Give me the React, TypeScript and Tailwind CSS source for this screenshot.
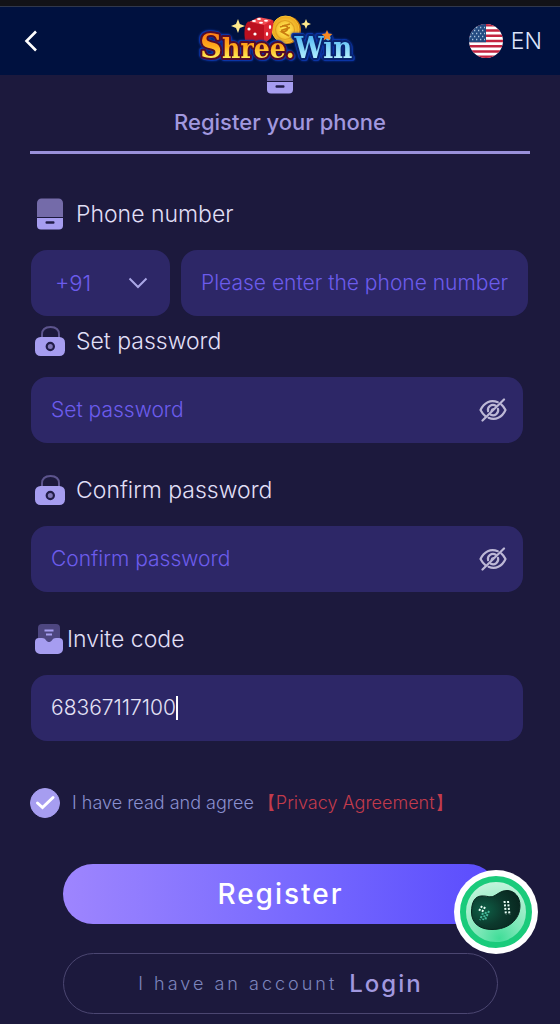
import { useState, type ReactNode } from "react";

function PhoneIcon() {
  return (
    <svg width="26" height="32" viewBox="0 0 26 32" aria-hidden="true" className="shrink-0">
      <path d="M0 19V5a4.500 4.500 0 0 1 4.500-4.500h17A4.500 4.500 0 0 1 26 5v14z" fill="#746ba9" />
      <path d="M0 20h26v7.500a4 4 0 0 1-4 4H4a4 4 0 0 1-4-4z" fill="#a69df0" />
      <rect x="8.500" y="23.300" width="9" height="2.400" rx="1" fill="#211c48" />
    </svg>
  );
}

function LockIcon() {
  return (
    <svg width="30" height="32" viewBox="0 0 30 32" aria-hidden="true" className="shrink-0">
      <path d="M7 13V9.500C7 4.500 10 2 15.500 2S24 4.500 24 9.500V13" fill="none" stroke="#5c548d" strokeWidth="2" />
      <rect y="12" width="30" height="19" rx="5.500" fill="#a69df0" />
      <circle cx="15.300" cy="21.500" r="3.600" fill="#8077b8" stroke="#211c48" strokeWidth="2.200" />
    </svg>
  );
}

function InviteIcon() {
  return (
    <svg width="28" height="32" viewBox="0 0 28 32" aria-hidden="true" className="shrink-0">
      <rect x="3" y="1" width="22" height="24" rx="4" fill="#4d4680" />
      <path d="M9.500 7.500h9M11 11.500h6" stroke="#a69df0" strokeWidth="2" />
      <path d="M4 15h3c2 0 3 .8 4 2.200 1.600 2.400 4.400 2.400 6 0C18 15.800 19 15 21 15h3a4 4 0 0 1 4 4v7a5 5 0 0 1-5 5H5a5 5 0 0 1-5-5v-7a4 4 0 0 1 4-4z" fill="#a69df0" />
    </svg>
  );
}

function EyeOffIcon() {
  return (
    <svg width="28" height="24" viewBox="0 0 28 24" fill="none" stroke="#bdb8d6" strokeWidth="2.200" strokeLinecap="round" strokeLinejoin="round" aria-hidden="true">
      <path d="M18.800 4.200C11.500 1.200 5 4.500 1.500 12c1.300 2.500 2.800 4.400 4.600 5.800M22.200 6.300C24 7.700 25.300 9.600 26.500 12 23 19.500 16.500 22.800 9.500 19.800" />
      <path d="M16.800 7.700c-4-2.400-8.800 1-7.700 5.500M19 10.800c1.200 4.300-3.300 8-7.200 6" />
      <path d="M14.500 10.800c-1.500.2-2 .8-2.200 2" strokeWidth="1.600" />
      <path d="M25 1.500 3.500 22.500" />
    </svg>
  );
}

function Logo() {
  return (
    <svg width="160" height="56" viewBox="0 0 160 56" role="img" aria-label="Shree.Win" className="overflow-visible">
      <defs>
        <linearGradient id="gold" gradientUnits="userSpaceOnUse" x1="0" y1="21" x2="0" y2="46">
          <stop offset="0" stopColor="#ff7f16" />
          <stop offset="0.5" stopColor="#ffac1c" />
          <stop offset="1" stopColor="#fff25a" />
        </linearGradient>
        <linearGradient id="ice" gradientUnits="userSpaceOnUse" x1="0" y1="21" x2="0" y2="46">
          <stop offset="0" stopColor="#49b5f4" />
          <stop offset="1" stopColor="#b8f2ff" />
        </linearGradient>
        <radialGradient id="coin">
          <stop offset="0.3" stopColor="#ffe04c" />
          <stop offset="1" stopColor="#eba41c" />
        </radialGradient>
      </defs>
      <circle cx="86" cy="17" r="14" fill="#c97b12" />
      <circle cx="84.500" cy="16.500" r="13.500" fill="url(#coin)" stroke="#f7c331" />
      <circle cx="84" cy="17" r="9.500" fill="none" stroke="#e0a021" strokeWidth="1.200" />
      <path d="m79 14 10-3m-9 6.500 9-3M81 13c7-2 8 5 0 6l7 4" fill="none" stroke="#ca7c10" strokeWidth="1.800" />
      <path d="m48 9 8-4q2-1 4-.5l10 2q2 .5 0 2l-7 5z" fill="#f04a50" />
      <path d="M47 8.500 63 12v20H47l-3-5q-2-14 3-18.500z" fill="#bc101f" />
      <path d="m63 12 8-5q2 0 1.500 3L70 25l-7 6z" fill="#dc2533" />
      <g fill="#fff">
        <ellipse cx="53" cy="8" rx="2" ry="1" /><ellipse cx="58" cy="6" rx="2" ry="1" />
        <ellipse cx="60" cy="9.800" rx="2" ry="1" /><ellipse cx="65" cy="7.800" rx="2" ry="1" />
        <circle cx="48" cy="16" r="1.600" /><circle cx="54" cy="21" r="1.600" />
        <ellipse cx="69" cy="14" rx="1.200" ry="2" /><ellipse cx="66" cy="21" rx="1.200" ry="2" />
      </g>
      <path d="m37 6 1.800 5L44 13l-5.200 2L37 20l-2-5-5-2 5-2z" fill="#ffe98c" />
      <path d="m105 6 1.400 3.600L110 11l-3.600 1.400L105 16l-1.400-3.600L100 11l3.600-1.400z" fill="#ffe98c" />
      <text
        x="-1"
        y="45"
        fontFamily="'DejaVu Serif Condensed','DejaVu Serif',serif"
        fontWeight="700"
        fontSize="29"
        strokeLinejoin="round"
        strokeWidth="4"
        paintOrder="stroke"
        className="[filter:drop-shadow(1px_1px_0_#0b35a5)_drop-shadow(-1px_-1px_0_#0b35a5)_drop-shadow(0_0_1px_#0b35a5)]"
      >
        <tspan fill="url(#gold)" stroke="#530b2a" fontSize="34">S</tspan>
        <tspan fill="url(#gold)" stroke="#530b2a" fontSize="28">hree.</tspan>
        <tspan fill="url(#ice)" stroke="#09246f">Win</tspan>
      </text>
      <path d="m126 17 1.600 3.400 3.700.5-2.700 2.600.7 3.700-3.300-1.800-3.300 1.800.7-3.700-2.700-2.600 3.700-.5z" fill="#f88922" />
    </svg>
  );
}

function Flag() {
  return (
    <svg width="34" height="34" viewBox="0 0 34 34" aria-hidden="true">
      <clipPath id="round"><circle cx="17" cy="17" r="17" /></clipPath>
      <g clipPath="url(#round)">
        <path fill="#fff" d="M0 0h34v34H0z" />
        <path stroke="#c32440" strokeWidth="2.620" d="M0 1.300h34M0 6.500h34M0 11.800h34M0 17h34M0 22.200h34M0 27.500h34M0 32.700h34" />
        <path fill="#234a80" d="M0 0h17v18.300H0z" />
        <path stroke="#a9c2dc" strokeWidth="1.300" strokeDasharray="1.300 2.700" d="M3 3.500h13M1 6.500h15M3 9.500h13M1 12.500h15M3 15.500h13" />
      </g>
    </svg>
  );
}

function SupportIcon() {
  return (
    <svg width="84" height="84" viewBox="0 0 84 84" aria-hidden="true">
      <defs>
        <radialGradient id="mint" cx="0.55" cy="0.9" r="0.9">
          <stop offset="0" stopColor="#40dd98" />
          <stop offset="0.35" stopColor="#7be7b7" />
          <stop offset="1" stopColor="#c9f5df" />
        </radialGradient>
        <radialGradient id="bean" cx="0.25" cy="0.5" r="0.8">
          <stop offset="0" stopColor="#0e6047" />
          <stop offset="0.5" stopColor="#0c3a2d" />
          <stop offset="1" stopColor="#08251e" />
        </radialGradient>
      </defs>
      <circle cx="42" cy="42" r="42" fill="#fff" />
      <circle cx="42" cy="42" r="33" fill="url(#mint)" stroke="#1acb7b" strokeWidth="6" />
      <path d="M27 26c6-.5 9 2 13 0s7-5.500 13-5.500c7.500 0 13 6.500 13 15C66 50 54 59.500 38 59.500c-12 0-20.500-6-20.500-17.500 0-10 3.500-15.500 9.500-16z" fill="url(#bean)" stroke="#07241d" />
      <g strokeWidth="2" strokeDasharray="2 1.500" fill="none">
        <path d="m28 36-3 5m6-4-3 5" stroke="#e9fff6" />
        <path d="m29 43-3 7m6-8-3 8m6-9-4 9" stroke="#45b99a" />
        <path d="m50.500 31 1.500 14m2-14 1.500 14" stroke="#e9fff6" />
      </g>
    </svg>
  );
}

const fieldBox = "flex h-[66px] items-center rounded-2xl bg-[#2d2767]";
const inputText = "bg-transparent text-[21px] font-light outline-none placeholder:text-[#6c5cec] placeholder:opacity-100";

function FieldLabel({ htmlFor, icon, children, tight }: { htmlFor: string; icon: ReactNode; children: string; tight?: boolean }) {
  return (
    <label htmlFor={htmlFor} className={`flex h-10 items-center text-[23px] font-light text-[#e0dff6] ${tight ? "gap-1" : ""}`}>
      <span className={tight ? "flex w-8 justify-end" : "flex w-[45px] pl-1"}>{icon}</span>
      {children}
    </label>
  );
}

function PasswordField({ id, label }: { id: string; label: string }) {
  const [shown, setShown] = useState(false);
  return (
    <div>
      <FieldLabel htmlFor={id} icon={<LockIcon />}>{label}</FieldLabel>
      <div className={`${fieldBox} mt-4 mr-[7px] pr-4 pl-5`}>
        <input id={id} type={shown ? "text" : "password"} placeholder={label} className={`${inputText} min-w-0 flex-1 text-[#e0dff6]`} />
        <button type="button" aria-label="Toggle password visibility" onClick={() => setShown(!shown)}>
          <EyeOffIcon />
        </button>
      </div>
    </div>
  );
}

export default function App() {
  const [agreed, setAgreed] = useState(true);
  return (
    <div className="min-h-screen overflow-hidden bg-[#1c193d] pb-2.5 font-['Inter',sans-serif]">
      <header className="border-t-[6px] border-[#121217] bg-[#00113f]">
        <div className="grid h-[69px] grid-cols-[1fr_auto_1fr] items-center border-t border-[#30374b] pr-[18px] pl-5">
          <button type="button" aria-label="Back" className="justify-self-start">
            <svg width="24" height="24" viewBox="0 0 24 24" fill="none" stroke="#fff" strokeWidth="2.600" aria-hidden="true">
              <path d="M16 2.500 6.500 12l9.500 9.500" />
            </svg>
          </button>
          <Logo />
          <button type="button" className="flex items-center gap-2 justify-self-end text-[23px] font-light text-[#dce4fb]">
            <Flag />
            EN
          </button>
        </div>
      </header>

      <main className="px-[30px]">
        <div className="flex h-[19px] items-end justify-center overflow-hidden">
          <PhoneIcon />
        </div>
        <h1 className="flex h-[60px] items-center justify-center border-b-[3px] border-[#9990da] text-[22px] font-medium text-[#a198df]">
          Register your phone
        </h1>

        <form className="mt-10 pl-px" onSubmit={(e) => e.preventDefault()}>
          <FieldLabel htmlFor="phone" icon={<span className="pl-0.5"><PhoneIcon /></span>}>Phone number</FieldLabel>
          <div className="mt-4 flex gap-[11px]">
            <div className={`${fieldBox} relative w-[139px] shrink-0`}>
              <select aria-label="Country code" className="h-full w-full appearance-none bg-transparent pl-6 text-[22px] font-light text-[#6c5cec] outline-none">
                <option>+91</option>
              </select>
              <svg width="20" height="12" viewBox="0 0 20 12" fill="none" stroke="#aaa7e6" strokeWidth="2" aria-hidden="true" className="pointer-events-none absolute right-[22px]">
                <path d="m1.500 1.500 8.500 8.500 8.500-8.500" />
              </svg>
            </div>
            <div className={`${fieldBox} mr-0.5 min-w-0 flex-1 pr-2 pl-5`}>
              <input id="phone" type="tel" placeholder="Please enter the phone number" className={`${inputText} w-full text-[#e0dff6]`} />
            </div>
          </div>

          <div className="mt-[5px] flex flex-col gap-[27px]">
            <PasswordField id="password" label="Set password" />
            <PasswordField id="confirm" label="Confirm password" />
            <div>
              <FieldLabel htmlFor="invite" tight icon={<InviteIcon />}>Invite code</FieldLabel>
              <div className={`${fieldBox} mt-4 mr-[7px] px-5`}>
                <input id="invite" defaultValue="68367117100" className={`${inputText} max-w-full [field-sizing:content] text-[#e4e2f6]`} />
                <span className="h-6 w-0.5 bg-white" />
              </div>
            </div>
          </div>

          <div className="mt-[47px] flex h-[30px] items-center text-lg font-light">
            <label className="flex items-center gap-3 text-[#8a90cf]">
              <span className="relative -ml-px flex">
                <input type="checkbox" checked={agreed} onChange={(e) => setAgreed(e.target.checked)} className="peer size-[30px] appearance-none rounded-full border border-[#a69df0] checked:bg-[#a69df0]" />
                <svg width="30" height="30" viewBox="0 0 30 30" fill="none" stroke="#fff" strokeWidth="3" strokeLinecap="round" aria-hidden="true" className="pointer-events-none absolute hidden peer-checked:block">
                  <path d="m7.500 15 5 4.500 10.500-10" />
                </svg>
              </span>
              I have read and agree
            </label>
            <a href="#privacy" className="ml-1 text-[#c23b4c]">【Privacy Agreement】</a>
          </div>

          <div className="relative mt-[46px] flex flex-col gap-[29px] px-8">
            <button type="submit" className="h-[60px] rounded-full bg-linear-to-r from-[#9e85fe] to-[#5a4bfd] text-[28px] font-medium tracking-[2px] text-white">
              Register
            </button>
            <a href="#login" className="flex h-[61px] items-center justify-center gap-3 rounded-full border border-[#4b4671]">
              <span className="text-lg font-light tracking-[3px] text-[#7d85bd]">I have an account</span>
              <span className="text-2xl font-medium tracking-[2px] text-[#a198df]">Login</span>
            </a>
            <button type="button" aria-label="Customer support" className="absolute top-1.5 -right-2 rounded-full">
              <SupportIcon />
            </button>
          </div>
        </form>
      </main>
    </div>
  );
}
